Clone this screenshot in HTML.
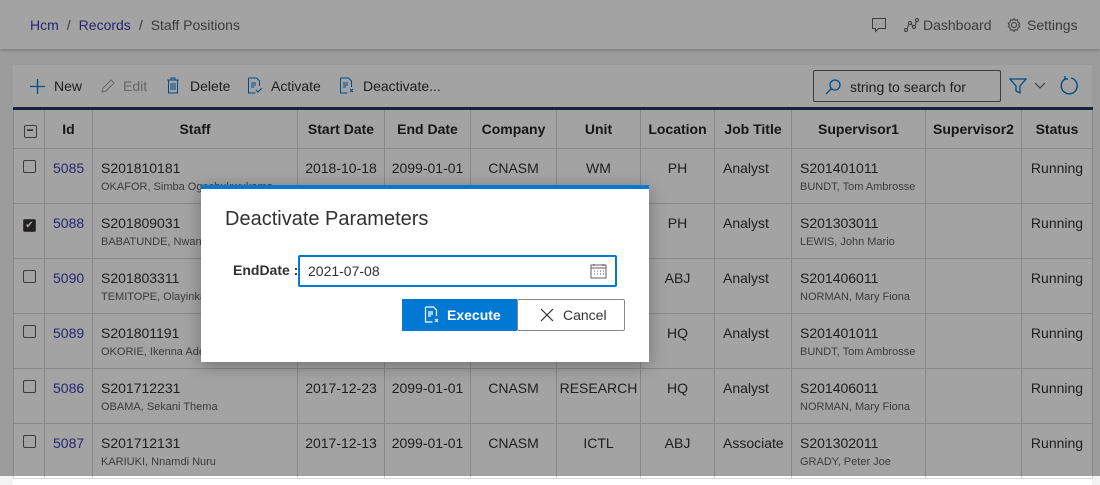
<!DOCTYPE html>
<html><head><meta charset="utf-8"><style>
*{box-sizing:border-box;margin:0;padding:0}
body{width:1100px;height:476px;overflow:hidden;background:#f3f3f3;font-family:"Liberation Sans",sans-serif;font-size:14px;color:#323130;position:relative}
.hdr{position:absolute;left:0;top:0;width:1100px;height:49px;background:#fff;box-shadow:0 1px 3px rgba(0,0,0,.25)}
.bc{position:absolute;left:30px;top:17px;font-size:14px;color:#605e5c}
.bc a{color:#3c3cb4;text-decoration:none}
.bc span{margin:0 8px}
.hr{position:absolute;top:17px;font-size:14px;color:#605e5c}
.panel{position:absolute;left:13px;top:65px;width:1079px;height:420px;background:#fff}
.tb{position:absolute;top:78px;font-size:14px;color:#323130}
.search{position:absolute;left:813px;top:70px;width:188px;height:32px;border:1px solid #605e5c;border-radius:2px}
.search span{position:absolute;left:36px;top:8px;color:#323130}
table{position:absolute;left:13px;top:107px;width:1079px;border-collapse:collapse;table-layout:fixed;border-top:3px solid #243a5e}
td,th{border:1px solid #d6d6d6;vertical-align:top;white-space:nowrap;overflow:hidden}
th{height:40px;font-weight:bold;text-align:center;vertical-align:middle;color:#252423;padding:0 2px}
td{height:55px;padding:11px 8px 0 8px}
td.c{text-align:center;padding-left:2px;padding-right:2px}
td small{display:block;font-size:11px;color:#605e5c;margin-top:5px;white-space:nowrap;overflow:hidden}
.id{color:#3c3cb4}
.cb{display:inline-block;width:13px;height:13px;border:1px solid #605e5c;border-radius:2px;margin-left:2px}
.cb.on{background:#323130;color:#fff;font-size:10px;text-align:center;line-height:11px}
.ov{position:absolute;left:0;top:0;width:1100px;height:476px;background:rgba(0,0,0,.36)}
.modal{position:absolute;left:201px;top:185px;width:448px;height:177px;background:#fff;border-top:4px solid #0078d4;box-shadow:0 4px 16px rgba(0,0,0,.3)}
.modal h2{position:absolute;left:24px;top:19px;font-size:20px;font-weight:normal;color:#323130}
.lbl{position:absolute;left:32px;top:73px;font-weight:bold;font-size:14px;color:#323130}
.inp{position:absolute;left:97px;top:66px;width:319px;height:32px;border:2px solid #0078d4;border-radius:2px}
.inp span{position:absolute;left:8px;top:6px}
.ex{position:absolute;left:201px;top:110px;width:115px;height:32px;background:#0078d4;color:#fff;font-weight:bold}
.ca{position:absolute;left:316px;top:110px;width:108px;height:32px;border:1px solid #8a8886;border-radius:2px;background:#fff}
</style></head><body>
<div class="hdr">
<div class="bc"><a>Hcm</a><span>/</span><a>Records</a><span>/</span>Staff Positions</div>
<svg style="position:absolute;left:871px;top:17px" width="16" height="16" fill="none" stroke="#605e5c"><path d="M1.5 1.5h13v10h-7l-3 3v-3h-3z"/><path d="M5 7h.5M8 7h.5M11 7h.5"/></svg>
<svg style="position:absolute;left:903px;top:17px" width="16" height="16" fill="none" stroke="#605e5c"><circle cx="3" cy="13" r="1.5"/><circle cx="7" cy="6" r="1.5"/><circle cx="11" cy="10" r="1.5"/><circle cx="14" cy="3" r="1.5"/><path d="M4 12l2-5M8 7l2 2M12 9l1.5-5"/></svg>
<div class="hr" style="left:923px">Dashboard</div>
<svg style="position:absolute;left:1006px;top:17px" width="16" height="16" fill="none" stroke="#605e5c"><circle cx="8" cy="8" r="2.5"/><path d="M8 1.5l1.3 1.8 2.2-.4.4 2.2 1.8 1.3-1.1 1.6 1.1 1.6-1.8 1.3-.4 2.2-2.2-.4L8 14.5l-1.3-1.8-2.2.4-.4-2.2L2.3 9.6 3.4 8 2.3 6.4l1.8-1.3.4-2.2 2.2.4z"/></svg>
<div class="hr" style="left:1027px">Settings</div>
</div>
<div class="panel"></div>
<svg style="position:absolute;left:29px;top:78px" width="17" height="17" stroke="#0078d4" stroke-width="1.3"><path d="M8.5 1v15M1 8.5h15"/></svg>
<div class="tb" style="left:54px">New</div>
<svg style="position:absolute;left:100px;top:78px" width="16" height="16" fill="none" stroke="#a19f9d"><path d="M2 14l1-4 8-8 3 3-8 8z"/></svg>
<div class="tb" style="left:123px;color:#a19f9d">Edit</div>
<svg style="position:absolute;left:166px;top:77px" width="14" height="17" fill="none" stroke="#0078d4"><path d="M1 3h12M5 3V1h4v2M2.5 3v13h9V3M5 6v7M7 6v7M9 6v7"/></svg>
<div class="tb" style="left:190px">Delete</div>
<svg style="position:absolute;left:247px;top:77px" width="16" height="17" fill="none" stroke="#0078d4"><path d="M1.5 1h8l3 3v5M1.5 1v15h7M4 6h5M4 8h5M4 10h3M9 13l2 2 4-4"/></svg>
<div class="tb" style="left:271px">Activate</div>
<svg style="position:absolute;left:339px;top:77px" width="16" height="17" fill="none" stroke="#0078d4"><path d="M1.5 1h8l3 3v6M1.5 1v15h7M4 6h5M4 8h5M4 10h3M11 12l3 3M14 12l-3 3"/></svg>
<div class="tb" style="left:363px">Deactivate...</div>
<div class="search"><svg style="position:absolute;left:10px;top:7px" width="18" height="18" fill="none" stroke="#0078d4" stroke-width="1.3"><circle cx="11" cy="7" r="5"/><path d="M7.5 10.5L2 16"/></svg><span>string to search for</span></div>
<svg style="position:absolute;left:1009px;top:77px" width="18" height="18" fill="none" stroke="#0078d4" stroke-width="1.3"><path d="M1 2h16l-6 7v7l-4-2V9z"/></svg>
<svg style="position:absolute;left:1034px;top:82px" width="12" height="8" fill="none" stroke="#605e5c"><path d="M1 1l5 5 5-5"/></svg>
<svg style="position:absolute;left:1059px;top:76px" width="20" height="20" fill="none" stroke="#0078d4" stroke-width="1.4"><path d="M6 3A8 8 0 1 0 12 2M6 3V0M6 3H9"/></svg>
<table>
<colgroup><col style="width:31px"><col style="width:48px"><col style="width:205px"><col style="width:87px"><col style="width:86px"><col style="width:86px"><col style="width:84px"><col style="width:74px"><col style="width:77px"><col style="width:134px"><col style="width:96px"><col style="width:71px"></colgroup>
<tr><th><span class="cb" style="line-height:9px;font-size:12px">−</span></th><th>Id</th><th>Staff</th><th>Start Date</th><th>End Date</th><th>Company</th><th>Unit</th><th>Location</th><th>Job Title</th><th>Supervisor1</th><th>Supervisor2</th><th>Status</th></tr>
<tr><td style="padding-left:7px"><span class="cb"></span></td><td class="id">5085</td><td>S201810181<small>OKAFOR, Simba Ogechukwukama</small></td><td class="c">2018-10-18</td><td class="c">2099-01-01</td><td class="c">CNASM</td><td class="c">WM</td><td class="c">PH</td><td>Analyst</td><td>S201401011<small>BUNDT, Tom Ambrosse</small></td><td></td><td class="c">Running</td></tr>
<tr><td style="padding-left:7px"><span class="cb on">✔</span></td><td class="id">5088</td><td>S201809031<small>BABATUNDE, Nwanneka</small></td><td class="c"></td><td class="c"></td><td class="c"></td><td class="c"></td><td class="c">PH</td><td>Analyst</td><td>S201303011<small>LEWIS, John Mario</small></td><td></td><td class="c">Running</td></tr>
<tr><td style="padding-left:7px"><span class="cb"></span></td><td class="id">5090</td><td>S201803311<small>TEMITOPE, Olayinka</small></td><td class="c"></td><td class="c"></td><td class="c"></td><td class="c"></td><td class="c">ABJ</td><td>Analyst</td><td>S201406011<small>NORMAN, Mary Fiona</small></td><td></td><td class="c">Running</td></tr>
<tr><td style="padding-left:7px"><span class="cb"></span></td><td class="id">5089</td><td>S201801191<small>OKORIE, Ikenna Adebayo</small></td><td class="c"></td><td class="c"></td><td class="c"></td><td class="c"></td><td class="c">HQ</td><td>Analyst</td><td>S201401011<small>BUNDT, Tom Ambrosse</small></td><td></td><td class="c">Running</td></tr>
<tr><td style="padding-left:7px"><span class="cb"></span></td><td class="id">5086</td><td>S201712231<small>OBAMA, Sekani Thema</small></td><td class="c">2017-12-23</td><td class="c">2099-01-01</td><td class="c">CNASM</td><td class="c">RESEARCH</td><td class="c">HQ</td><td>Analyst</td><td>S201406011<small>NORMAN, Mary Fiona</small></td><td></td><td class="c">Running</td></tr>
<tr><td style="padding-left:7px"><span class="cb"></span></td><td class="id">5087</td><td>S201712131<small>KARIUKI, Nnamdi Nuru</small></td><td class="c">2017-12-13</td><td class="c">2099-01-01</td><td class="c">CNASM</td><td class="c">ICTL</td><td class="c">ABJ</td><td>Associate</td><td>S201302011<small>GRADY, Peter Joe</small></td><td></td><td class="c">Running</td></tr>
</table>
<div class="ov"></div>
<div class="modal">
<h2>Deactivate Parameters</h2>
<div class="lbl">EndDate :</div>
<div class="inp"><span>2021-07-08</span><svg style="position:absolute;left:290px;top:6px" width="17" height="16" fill="none" stroke="#605e5c"><rect x="1" y="2" width="15" height="13"/><path d="M1 5h15M4 1v2M13 1v2M4 8h1M7 8h1M10 8h1M13 8h1M4 11h1M7 11h1M10 11h1M13 11h1"/></svg></div>
<div class="ex"><svg style="position:absolute;left:22px;top:7px" width="16" height="18" fill="none" stroke="#fff" stroke-width="1.2"><path d="M1.5 1h8l3 3v6M1.5 1v15h7M4 6h5M4 8h5M4 10h3M11 13l3 3M14 13l-3 3"/></svg><span style="position:absolute;left:45px;top:8px">Execute</span></div>
<div class="ca"><svg style="position:absolute;left:22px;top:8px" width="14" height="14" stroke="#323130" stroke-width="1.2"><path d="M1 1l12 12M13 1L1 13"/></svg><span style="position:absolute;left:45px;top:7px">Cancel</span></div>
</div>
</body></html>
